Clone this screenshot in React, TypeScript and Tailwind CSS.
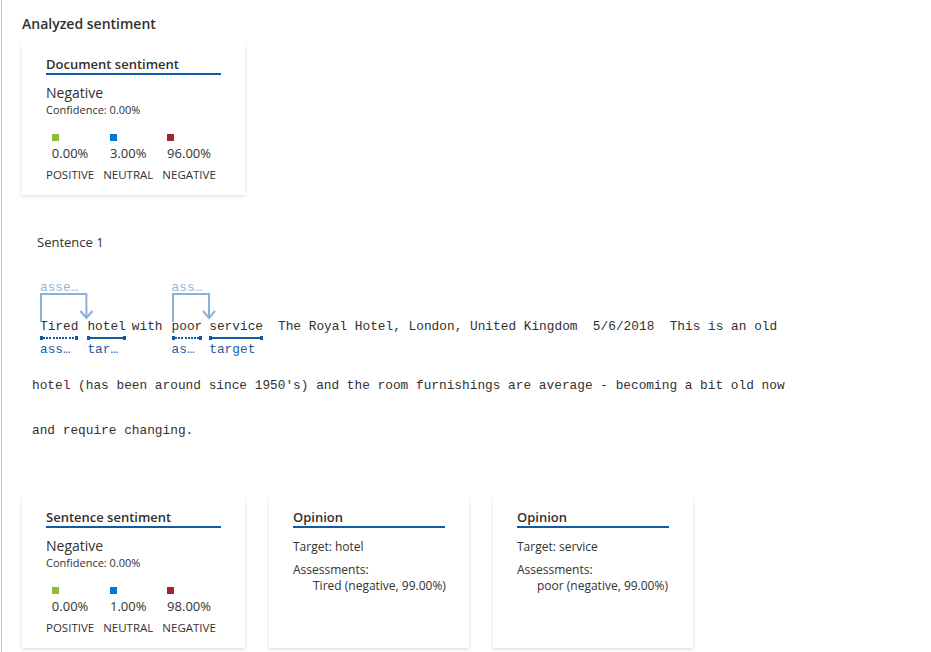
import type { ReactNode } from 'react';

// ── Shared styles ────────────────────────────────────────────

const CARD_SHADOW =
  'bg-white shadow-[0_1.6px_3.6px_rgba(0,0,0,0.13),0_0.3px_0.9px_rgba(0,0,0,0.11)]';
const MONO = "font-['Liberation_Mono',monospace] text-[12.8px]";
const BLUE = 'bg-[#105ba8]';

// ── Cards ────────────────────────────────────────────────────

function Card({ title, width, children }: { title: string; width: string; children: ReactNode }) {
  return (
    <div className={`${width} h-[152px] shrink-0 px-6 pt-[13px] ${CARD_SHADOW}`}>
      <div className="border-b-2 border-[#105ba8] text-[13px] font-semibold leading-[17px] text-[#323130]">
        {title}
      </div>
      {children}
    </div>
  );
}

const SCORE_COLORS = ['bg-[#8fbc3a]', 'bg-[#0078d4]', 'bg-[#a4262c]'];
const SCORE_LABELS = ['POSITIVE', 'NEUTRAL', 'NEGATIVE'];

function SentimentCard({ title, scores }: { title: string; scores: string[] }) {
  return (
    <Card title={title} width="w-[223px]">
      <div className="mt-[8px] text-[14px] leading-[20px]">Negative</div>
      <div className="text-[11px] leading-[14px]">Confidence: 0.00%</div>
      <div className="mt-[17px] flex gap-[9px]">
        {scores.map((s, i) => (
          <div key={SCORE_LABELS[i]} className="flex flex-col items-center">
            <div className="flex flex-col items-start">
              <span className={`h-[7px] w-[7px] ${SCORE_COLORS[i]}`} />
              <span className="mt-[2.5px] text-[13px] leading-[18px]">{s}</span>
            </div>
            <span className="mt-[6px] text-[11.5px] leading-[14px]">{SCORE_LABELS[i]}</span>
          </div>
        ))}
      </div>
    </Card>
  );
}

function OpinionCard({ target, assessment }: { target: string; assessment: string }) {
  return (
    <Card title="Opinion" width="w-[200px]">
      <div className="mt-[11px] text-[12px] leading-[16px]">Target: {target}</div>
      <div className="mt-[7px] text-[12px] leading-[16px]">Assessments:</div>
      <div className="whitespace-nowrap pl-[20px] text-[12px] leading-[16px]">{assessment}</div>
    </Card>
  );
}

// ── Annotated text ───────────────────────────────────────────

function Underline({ dotted }: { dotted?: boolean }) {
  return (
    <div className="flex h-[5px] items-center">
      <span className={`h-[4px] w-[3px] ${BLUE}`} />
      <span
        className={
          dotted
            ? 'h-[2px] flex-1 bg-[repeating-linear-gradient(90deg,#105ba8_0_2px,transparent_2px_3.2px)]'
            : `h-[2px] flex-1 ${BLUE}`
        }
      />
      <span className={`h-[4px] w-[3px] ${BLUE}`} />
    </div>
  );
}

function Token({
  word,
  top,
  bottom,
  dotted,
  className = '',
}: {
  word: string;
  top?: string;
  bottom: string;
  dotted?: boolean;
  className?: string;
}) {
  return (
    <div className={`flex flex-col ${className}`}>
      <div className="h-[16px] leading-[16px] text-[#93b5dc]">{top ?? ''}</div>
      <div className="h-[23px]" />
      <div className="leading-[16px]">{word}</div>
      <Underline dotted={dotted} />
      <div className="mt-[2px] leading-[16px] text-[#1b5ba4]">{bottom}</div>
    </div>
  );
}

// Bracket arrow from the assessment label down onto the target word.
function Bracket({ to }: { to: number }) {
  return (
    <svg
      className="pointer-events-none absolute left-0 top-0"
      width={to + 8}
      height={42}
      fill="none"
      stroke="#8cb0d8"
      strokeWidth={2}
    >
      <path d={`M1 42 V14 H${to} V38`} />
      <path d={`M${to - 6} 31 L${to} 38 L${to + 6} 31`} />
    </svg>
  );
}

function Plain({ children, className = '' }: { children: ReactNode; className?: string }) {
  return <div className={`pt-[39px] leading-[16px] ${className}`}>{children}</div>;
}

// ── App ──────────────────────────────────────────────────────

export default function App() {
  return (
    <div className="ml-px min-h-screen border-l border-[#c8c6c4] bg-white pl-5 pt-[14px] font-['Open_Sans',sans-serif] text-[#323130]">
      <h2 className="text-[14px] font-semibold leading-[20px]">Analyzed sentiment</h2>

      <div className="mt-[9px]">
        <SentimentCard title="Document sentiment" scores={['0.00%', '3.00%', '96.00%']} />
      </div>

      <div className="mt-[38px] pl-[15px] text-[13px] leading-[18px]">Sentence 1</div>

      <div className={`mt-[29px] flex items-start whitespace-pre pl-[18px] ${MONO}`}>
        <div className="relative flex">
          <Token word="Tired" top="asse…" bottom="ass…" dotted />
          <Token word="hotel" bottom="tar…" className="ml-[9px]" />
          <Bracket to={46.4} />
        </div>
        <Plain className="ml-[6px]">with</Plain>
        <div className="relative ml-[9px] flex">
          <Token word="poor" top="ass…" bottom="as…" dotted />
          <Token word="service" bottom="target" className="ml-[7px]" />
          <Bracket to={37} />
        </div>
        <Plain className="ml-[15px]">
          The Royal Hotel, London, United Kingdom  5/6/2018  This is an old
        </Plain>
      </div>

      <div className={`mt-[20px] whitespace-pre pl-[10px] leading-[16px] ${MONO}`}>
        hotel (has been around since 1950's) and the room furnishings are average - becoming a bit old now
      </div>
      <div className={`mt-[29px] whitespace-pre pl-[10px] leading-[16px] ${MONO}`}>
        and require changing.
      </div>

      <div className="mt-[57px] flex gap-6">
        <SentimentCard title="Sentence sentiment" scores={['0.00%', '1.00%', '98.00%']} />
        <OpinionCard target="hotel" assessment="Tired (negative, 99.00%)" />
        <OpinionCard target="service" assessment="poor (negative, 99.00%)" />
      </div>
    </div>
  );
}
